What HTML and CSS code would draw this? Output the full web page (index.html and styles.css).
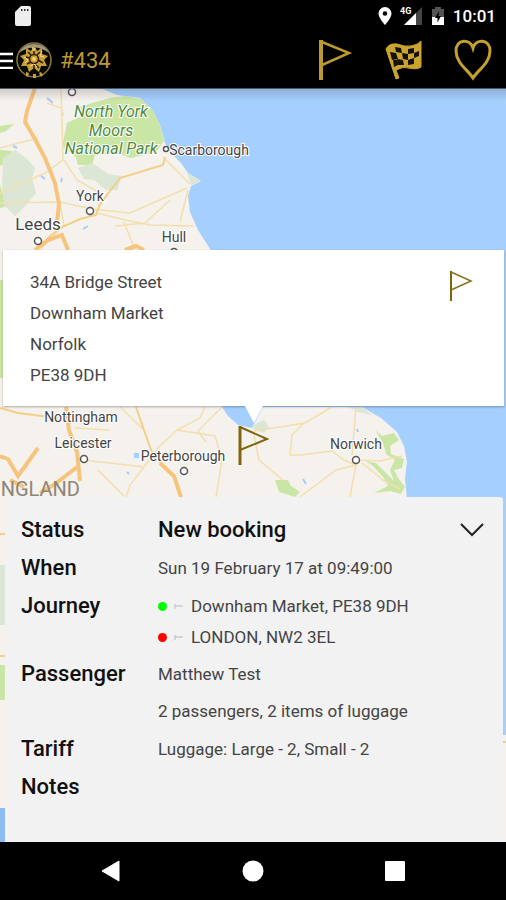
FILE: index.html
```
<!DOCTYPE html>
<html lang="en">
<head>
  <meta charset="UTF-8">
  <meta name="viewport" content="width=device-width, initial-scale=1.0">
  <title>Booking #434</title>
  <link rel="stylesheet" href="styles.css">
</head>
<body>

  <div class="status-bar">
    <svg class="sd-card" width="18" height="20" viewBox="0 0 18 20">
      <path d="M7 0H15Q17 0 17 2V18Q17 20 15 20H3Q1 20 1 18V6Z" fill="#eee"/>
      <path d="M7 3h1.500v2H7zM10 3h1.500v2H10zM13 3h1.500v2H13z" fill="#333"/>
    </svg>
    <div class="status-icons">
      <svg width="14" height="18" viewBox="0 0 14 18">
        <path d="M7 0A6.500 6.500 0 0 0 .5 6.500C.5 11 7 18 7 18S13.500 11 13.500 6.500A6.500 6.500 0 0 0 7 0ZM7 4.200A2.300 2.300 0 1 1 7 8.800A2.300 2.300 0 0 1 7 4.200Z" fill="#fff"/>
      </svg>
      <svg width="23" height="20" viewBox="0 0 23 20">
        <path d="M22 1V19H4Z" fill="#444"/>
        <path d="M16 7V19H4Z" fill="#fff"/>
        <rect x="0" y="0" width="12" height="9" fill="#000"/>
        <text class="network" x="0" y="8">4G</text>
      </svg>
      <svg width="14" height="20" viewBox="0 0 14 20">
        <path d="M4 1h6v2h3v8H1V3h3z" fill="#555"/>
        <path d="M1 11h12v8H1z" fill="#fff"/>
        <path d="M8 5 4 12h2.500v4.500L10 10H7.500z" fill="#000"/>
      </svg>
      <span class="clock">10:01</span>
    </div>
  </div>

  <header class="toolbar">
    <button class="menu-button" aria-label="Menu">
      <svg width="13" height="17" viewBox="0 0 13 17">
        <path d="M0 2H13M0 9H13M0 16H13" stroke="#fff" stroke-width="2.500"/>
      </svg>
    </button>
    <svg class="logo" width="36" height="40" viewBox="0 0 36 40">
      <circle cx="18" cy="20" r="17" fill="#080a06" stroke="#8b7738" stroke-width="1.500"/>
      <path d="M3 13A17 17 0 0 1 33 13Q18 2 3 13Z" fill="#a09a84"/>
      <g fill="#c99d35">
        <path d="M18 5 21 11 26 8 26 14 32 16 28 20 31 26 25 26 23 32 18 28 13 32 11 26 5 26 8 20 4 16 10 14 10 8 15 11Z"/>
        <path d="M10 32l3 1-1 4-2-1zM17 34h3v4h-3zM25 32l2 3-2 2-2-4z"/>
      </g>
      <g fill="none" stroke="#2b1e06" stroke-width="1.500">
        <circle cx="18" cy="19" r="4.500"/>
        <path d="M18 10v5M18 23v6M10 17l4 1M22 20l5 3M12 12l3 3M24 12l-3 3M11 24l4-2M20 25l3 3"/>
      </g>
      <path d="M16 7l2 4 1-3M26 11l-2 5 4 1M8 17l4 3-3 3M14 26l4-2 3 3" fill="none" stroke="#f4dc82"/>
      <circle cx="18" cy="19" r="2" fill="#efd06a"/>
    </svg>
    <h1 class="title">#434</h1>
    <div class="actions">
      <button class="action" aria-label="Pickup">
        <svg width="36" height="42" viewBox="0 0 36 42">
          <path d="M4 1V41" stroke="#bd9a2c" stroke-width="4"/>
          <path d="M5 3 32 14 5 26" fill="none" stroke="#bd9a2c" stroke-width="2.500"/>
        </svg>
      </button>
      <button class="action" aria-label="Finish">
        <svg width="38" height="40" viewBox="0 0 38 40">
          <path d="M1 9Q4 3 12 4Q20 7 26 6Q33 5 36 1V27Q32 30 24 28Q18 26 11 30L14 38 11 39Z" fill="#c9a52f" stroke="#c9a52f" stroke-linejoin="round"/>
          <g fill="#151003">
            <path d="M10 7l6 1 1 5-6-1zM23 9l6-1v5l-6 1zM5 12l6 1 2 6-6 1zM17 13l6 1v6l-5-1zM29 13l5-2v5l-5 2zM12 19l6 1 1 5-6 0zM23 20l6-2v6l-6 1zM8 20l4 0 1 5-4 2z"/>
          </g>
        </svg>
      </button>
      <button class="action" aria-label="Favourite">
        <svg width="38" height="42" viewBox="0 0 38 42">
          <path d="M19 39C14 31 2 24 2 12C2 0 16 -1 19 9C22 -1 36 0 36 12C36 24 24 31 19 39Z" fill="none" stroke="#c4a02f" stroke-width="3"/>
        </svg>
      </button>
    </div>
  </header>

  <main class="map-view">
    <svg class="map" viewBox="0 88 506 754" preserveAspectRatio="xMidYMin slice">
      <rect x="0" y="88" width="506" height="754" fill="#a5cffe"/>
      <path fill="#f5f1ec" d="M0 88H100L117 95 140 98 153 111 160 125 165 143 171 153 181 163 188 173 201 181 191 186 188 196 190 212 198 230 212 252 222 407 228 416 238 425 252 428 263 407H362L381 418 397 432 404 446 407 462 405 478 407 500 400 735H506V842H0Z"/>
      <path d="M0 808H8V842H0Z" fill="#8dbcf5"/>

      <!-- parks and moorland -->
      <g fill="#c9e6a5">
        <path d="M67 123 82 116 80 107 92 103 110 98 125 96 141 99 153 111 160 125 164 141 156 152 140 156 130 158 118 153 95 155 92 165 78 165 76 157 62 146Z"/>
        <path d="M0 126 14 124 6 131 0 133ZM0 150 12 151 10 160 0 166ZM0 185 4 198 8 206 0 208Z"/>
        <path d="M0 280H3V378H0ZM0 665H5V700H0Z"/>
        <path d="M275 480 288 480 291 486 300 492 295 497 286 494 279 492Z"/>
        <path d="M375 430 382 436 394 433 399 440 390 446 391 454 404 459 402 468 394 470 398 478 405 487 401 494 390 491 374 493 388 486 384 478 373 466 366 461 376 463 388 475 394 481 390 470 395 460 386 454 383 443Z"/>
      </g>
      <g fill="#dce6d4">
        <path d="M3 158 15 150 26 158 35 168 32 178 36 193 26 205 15 216 4 205 2 188Z"/>
        <path d="M78 168 92 163 108 174 122 176 117 190 106 190 94 180 84 179Z"/>
        <path d="M187 173 201 181 191 185ZM253 425 264 420 269 427 264 433 254 430ZM348 407H362L372 415 358 412ZM0 565H5V625H0Z"/>
      </g>

      <!-- minor roads -->
      <g fill="none" stroke="#f3dfae" stroke-width="1.500">
        <path d="M61 88 63 160 45 173 0 193M64 160 77 180 100 193M47 103 61 108 64 116M0 203 60 202 92 209 130 213 187 188M97 213 125 220 150 225 194 226M115 226 145 223 170 200M124 222 135 250M163 157 174 168 190 184M188 190 180 222M60 204 64 225 40 250M0 148 38 138"/>
        <path d="M82 460 110 463 144 467 158 448 177 430 200 418 205 407M144 467 130 485 126 497M144 430 120 407M177 430 215 436 222 460 216 497M98 470 124 496M74 428 110 430"/>
        <path d="M254 431 280 427 305 423 332 407M304 423 292 435 290 455 300 455 332 451 344 460 356 465 336 470 300 497M356 465 350 497M362 463 383 480 400 489M356 407 352 455M254 435 259 460 283 480M361 460 380 461 402 456M222 407 198 431 206 442"/>
      </g>
      <!-- main roads -->
      <g fill="none" stroke="#f5cf86" stroke-width="2">
        <path d="M165 157 163 165 120 178 110 191 99 206 96 215 80 219 60 228 48 238"/>
        <path d="M136 407 144 430 151 450 162 465 176 480 181 497"/>
        <path d="M0 408 18 413 58 418M0 534H5M0 656H5M502 742H506"/>
      </g>
      <g fill="none" stroke="#f6c47d" stroke-width="4">
        <path d="M35 88 27 111 25 122 35 139 45 158 55 183 59 204 57 222"/>
        <path d="M0 456 8 459 18 476 38 448M66 407 69 430 77 452 80 481M77 467 55 484 40 493M160 463 174 476 181 497M10 480 24 487"/>
        <path d="M35 250 48 240 62 235 68 250M125 250 136 246 144 250"/>
      </g>
      <path d="M47 98l6 5M17 148l-4-2M41 176l4 3M61 182l1-4M83 229l5-3M127 472l2 2M357 429l1 3M303 479l3 5" stroke="#abc8f6" stroke-width="2"/>
      <rect x="134" y="453" width="5" height="5" fill="#a5cffe"/>

      <g fill="#fff" stroke="#555" stroke-width="1.500">
        <circle cx="72" cy="92" r="3.500"/>
        <circle cx="90" cy="211" r="3.500"/>
        <circle cx="38" cy="241" r="3.500"/>
        <circle cx="174" cy="252" r="3.500"/>
        <circle cx="166" cy="149" r="2.500"/>
        <circle cx="84" cy="459" r="3.500"/>
        <circle cx="184" cy="471" r="3.500"/>
        <circle cx="356" cy="460" r="3.500"/>
      </g>

      <g class="park-label">
        <text x="111" y="117">North York</text>
        <text x="111" y="136">Moors</text>
        <text x="111" y="154">National Park</text>
      </g>
      <g class="town-label">
        <text x="209" y="155">Scarborough</text>
        <text x="90" y="201">York</text>
        <text class="city" x="38" y="230">Leeds</text>
        <text x="174" y="242">Hull</text>
        <text x="81" y="422">Nottingham</text>
        <text x="83" y="448">Leicester</text>
        <text x="183" y="461">Peterborough</text>
        <text x="356" y="449">Norwich</text>
      </g>
      <text class="country-label" x="80" y="496">NGLAND</text>
    </svg>

    <section class="callout">
      <address class="address">
        34A Bridge Street<br>
        Downham Market<br>
        Norfolk<br>
        PE38 9DH
      </address>
      <svg width="24" height="30" viewBox="0 0 24 30">
        <path d="M2 0V30" stroke="#80640e" stroke-width="2"/>
        <path d="M2 1 22 10 2 19" fill="none" stroke="#8a701c" stroke-width="1.500"/>
      </svg>
    </section>
    <svg class="marker" width="32" height="40" viewBox="0 0 32 40">
      <path d="M3 0V39" stroke="#80640e" stroke-width="3"/>
      <path d="M3 1 30 13 3 24" fill="none" stroke="#80640e" stroke-width="2"/>
    </svg>

    <section class="sheet">
      <dl class="details">
        <dt>Status</dt>
        <dd class="status">
          New booking
          <button class="collapse" aria-label="Collapse">
            <svg width="24" height="14" viewBox="0 0 24 14">
              <path d="M1 1 12 12 23 1" fill="none" stroke="#222" stroke-width="2"/>
            </svg>
          </button>
        </dd>
        <dt>When</dt>
        <dd>Sun 19 February 17 at 09:49:00</dd>
        <dt>Journey</dt>
        <dd>
          <ul class="stops">
            <li class="stop">
              <svg width="9" height="5" viewBox="0 0 9 5"><path d="M1 0V5M1 2H9" fill="none" stroke="#bbb"/></svg>
              Downham Market, PE38 9DH
            </li>
            <li class="stop stop-end">
              <svg width="9" height="5" viewBox="0 0 9 5"><path d="M1 0V5M1 2H9" fill="none" stroke="#bbb"/></svg>
              LONDON, NW2 3EL
            </li>
          </ul>
        </dd>
        <dt>Passenger</dt>
        <dd>Matthew Test<br>2 passengers, 2 items of luggage</dd>
        <dt>Tariff</dt>
        <dd>Luggage: Large - 2, Small - 2</dd>
        <dt>Notes</dt>
        <dd></dd>
      </dl>
    </section>
  </main>

  <nav class="nav-bar">
    <button class="nav-button" aria-label="Back">
      <svg width="20" height="22" viewBox="0 0 20 22"><path d="M1 11 18 1V21Z" fill="#fff" stroke="#fff" stroke-linejoin="round"/></svg>
    </button>
    <button class="nav-button" aria-label="Home">
      <svg width="22" height="22" viewBox="0 0 22 22"><circle cx="11" cy="11" r="10.500" fill="#fff"/></svg>
    </button>
    <button class="nav-button" aria-label="Recent apps">
      <svg width="20" height="20" viewBox="0 0 20 20"><rect width="20" height="20" rx="1" fill="#fff"/></svg>
    </button>
  </nav>

</body>
</html>
```
FILE: styles.css
```
* {
  box-sizing: border-box;
}
body {
  font-family: Roboto, 'Liberation Sans', sans-serif;
  display: flex;
  flex-direction: column;
  min-height: 100vh;
  margin: 0;
  background-color: #000;
  color: #444;
}
button {
  display: flex;
  align-items: center;
  justify-content: center;
  padding: 0;
  border: none;
  background: none;
  cursor: pointer;
}
svg {
  display: block;
  flex-shrink: 0;
}

/* status bar */
.status-bar {
  display: flex;
  align-items: center;
  justify-content: space-between;
  height: 32px;
  padding: 0 10px 0 14px;
  color: #fff;
}
.status-icons {
  display: flex;
  align-items: center;
  gap: 8px;
}
.network {
  font-size: 9px;
  font-weight: 700;
  fill: #fff;
}
.clock {
  font-size: 17px;
  font-weight: 500;
}

/* toolbar */
.toolbar {
  display: flex;
  align-items: center;
  height: 56px;
  padding-right: 13px;
}
.logo {
  margin: 0 8px 0 3px;
}
.title {
  margin: 0;
  font-size: 22px;
  font-weight: 400;
  color: #bd9a2c;
}
.actions {
  display: flex;
  gap: 29px;
  margin-left: auto;
}
.action {
  width: 40px;
  height: 48px;
}

/* map */
.map-view {
  position: relative;
  display: flex;
  flex: 1;
  flex-direction: column;
  padding: 409px 3px 0 5px;
  overflow: hidden;
}
.map-view::before {
  content: "";
  position: absolute;
  z-index: 1;
  top: 0;
  left: 0;
  right: 0;
  height: 12px;
  border-top: 1px solid #46586a;
  background: linear-gradient(rgba(0, 0, 0, 0.15), transparent);
}
.map {
  position: absolute;
  top: 0;
  left: 0;
  width: 100%;
  height: 100%;
}
.park-label, .town-label {
  font-size: 14px;
  text-anchor: middle;
  fill: #444;
  stroke: #fff;
  stroke-width: 2px;
  paint-order: stroke;
}
.park-label {
  font-size: 16px;
  font-style: italic;
  fill: #4f8a3c;
}
.city {
  font-size: 17px;
}
.country-label {
  font-size: 20px;
  text-anchor: end;
  fill: #8d8578;
}

/* address bubble and its pin */
.callout {
  position: absolute;
  top: 162px;
  left: 3px;
  right: 2px;
  display: flex;
  justify-content: space-between;
  align-items: flex-start;
  padding: 17px 31px 15px 27px;
  background-color: #fff;
  box-shadow: 0 1px 2px rgba(0, 0, 0, 0.3);
}
.callout::after {
  content: "";
  position: absolute;
  top: 100%;
  left: 50%;
  border: 9px solid transparent;
  border-top: 17px solid #fff;
  border-bottom: 0;
  transform: translateX(-50%);
}
.callout svg {
  margin-top: 4px;
}
.address {
  font-size: 17px;
  font-style: normal;
  line-height: 31px;
}
.marker {
  position: absolute;
  top: 338px;
  left: 50%;
  transform: translateX(-50%);
}

/* booking details */
.sheet {
  position: relative;
  flex: 1;
  padding: 14px 19px 36px 16px;
  background-color: #f2f2f2;
  border-radius: 3px 3px 0 0;
}
.details {
  display: grid;
  grid-template-columns: 137px 1fr;
  margin: 0;
  line-height: 37px;
}
.details dt, .status {
  font-size: 22px;
  font-weight: 500;
  color: #111;
}
.details dd {
  margin: 0;
  padding-top: 1px;
  font-size: 17px;
}
.details .status {
  display: flex;
  align-items: center;
  justify-content: space-between;
  padding: 0 0 1px;
  font-size: 22px;
}
.stops {
  margin: 0;
  padding: 3px 0 2px;
  list-style: none;
  line-height: 31px;
}
.stop {
  display: flex;
  align-items: center;
}
.stop::before {
  content: "";
  width: 9px;
  height: 9px;
  border-radius: 50%;
  background-color: #0f0;
}
.stop svg {
  margin: 0 8px 0 7px;
}
.stop-end::before {
  background-color: #f00;
}

/* system navigation */
.nav-bar {
  display: flex;
  align-items: center;
  justify-content: center;
  gap: 102px;
  height: 58px;
}
.nav-button {
  width: 40px;
  height: 40px;
}
```
